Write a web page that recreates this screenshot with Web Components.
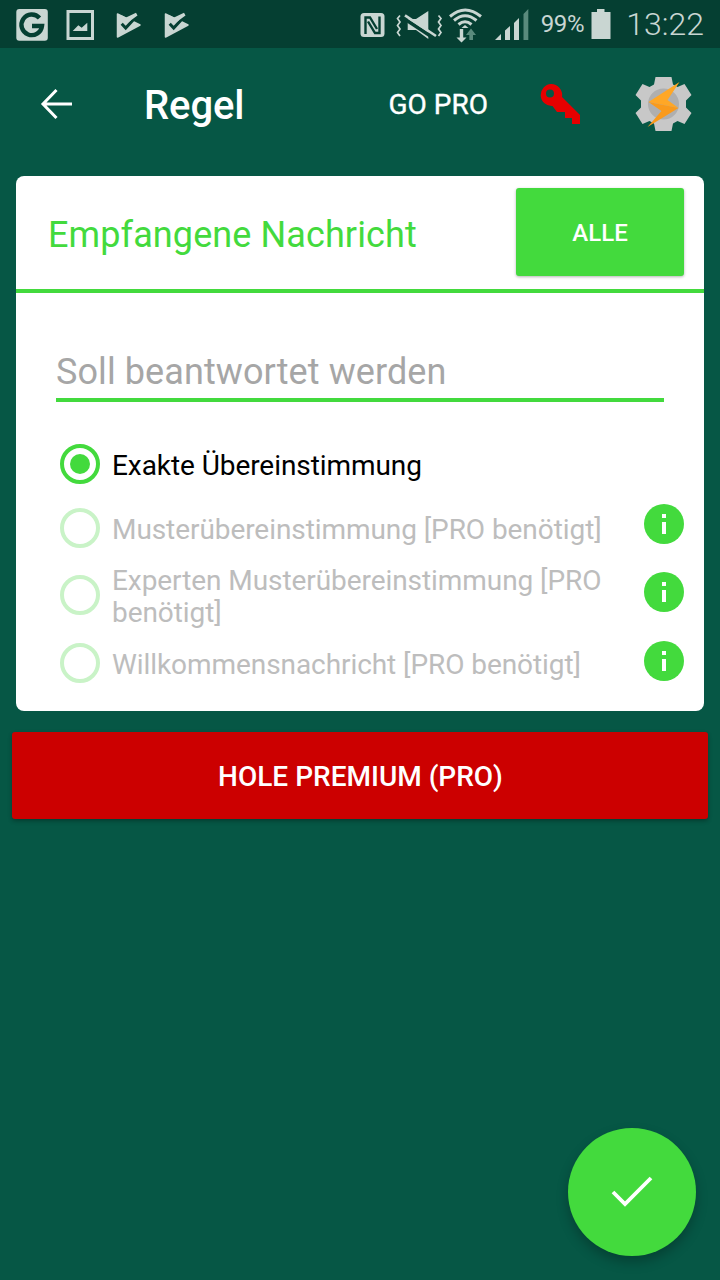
<!DOCTYPE html>
<html><head><meta charset="utf-8">
<style>
html,body{margin:0;padding:0;background:#065745;}
body{width:720px;height:1280px;overflow:hidden;font-family:Roboto,"Liberation Sans",sans-serif;}
app-screen{width:720px;height:1280px;}
</style></head>
<body>
<app-screen>
  <status-bar slot="status"></status-bar>
  <app-toolbar slot="toolbar" title="Regel"></app-toolbar>
  <rule-card heading="Empfangene Nachricht" action="ALLE" placeholder="Soll beantwortet werden">
    <radio-row checked>Exakte Übereinstimmung</radio-row>
    <radio-row disabled info>Musterübereinstimmung [PRO benötigt]</radio-row>
    <radio-row disabled info h="70">Experten Musterübereinstimmung [PRO benötigt]</radio-row>
    <radio-row disabled info h="66">Willkommensnachricht [PRO benötigt]</radio-row>
  </rule-card>
  <premium-button>HOLE PREMIUM (PRO)</premium-button>
  <fab-button slot="fab"></fab-button>
</app-screen>
<script>
function def(name,html,init){
  customElements.define(name,class extends HTMLElement{
    constructor(){super();this.attachShadow({mode:'open'}).innerHTML=html;}
    connectedCallback(){if(init)init(this,this.shadowRoot);}
  });
}
def('app-screen',`<style>
:host{display:flex;flex-direction:column;position:relative;background:#065745;color:#fff;}
.fab{position:absolute;left:568px;top:1128px;}
</style><slot name="status"></slot><slot name="toolbar"></slot><slot></slot><div class="fab"><slot name="fab"></slot></div>`);

const L='#c9d6d2',D='#053f32';
const CHECK=`<path fill="${L}" stroke="${L}" stroke-width="1.500" stroke-linejoin="round" d="M1.500 3L24 14L1.500 26Z"/><path d="M5.700 12.800L9.700 17L18.500 7.500" fill="none" stroke="${D}" stroke-width="3"/><path d="M5 4L10 6.500L20 1.700L21.500 4.500L14 10L11 12L7.500 9Z" fill="${L}"/>`;
def('status-bar',`<style>
:host{display:flex;align-items:center;height:48px;background:${D};color:${L};padding:0 16px;box-sizing:border-box;flex:none;position:relative;}
svg{display:block;flex:none;}
.l{display:flex;align-items:center;}
.r{margin-left:auto;display:flex;align-items:center;}
.pct{font-size:24px;letter-spacing:-.3px;margin-left:12px;line-height:28px;}
.time{font-size:32px;font-weight:300;margin-left:15px;line-height:36px;}
</style>
<div class="l">
<svg width="32" height="32" viewBox="0 0 32 32" style="margin-top:2px"><rect x="0.300" y="0" width="31.500" height="31.700" rx="3" fill="${L}"/><path d="M23.500 9A10.300 10.300 0 1 0 26 17H16" fill="none" stroke="${D}" stroke-width="4.400"/></svg>
<svg width="28" height="30" viewBox="0 0 28 30" style="margin-left:18px;margin-top:2px"><path fill-rule="evenodd" d="M0.500 0H28V30H0.500ZM3.500 3V27H25V3Z" fill="${L}"/><path d="M6.700 21L12.300 15.300L15.700 17.700L21.300 12.700V21Z" fill="${L}"/></svg>
<svg width="26" height="28" viewBox="0 0 26 28" style="margin-left:22px;margin-top:2px">${CHECK}</svg>
<svg width="26" height="28" viewBox="0 0 26 28" style="margin-left:22px;margin-top:2px">${CHECK}</svg>
</div>
<div class="r">
<svg width="25" height="25" viewBox="0 0 25 25" style="margin-top:2px"><rect x="0.500" width="24" height="24" rx="3.500" fill="${L}"/><path d="M5.500 21V4.500H10L17 16M19.500 3.500V20H15L8 8.500" fill="none" stroke="${D}" stroke-width="2.400"/></svg>
<svg width="48" height="32" viewBox="0 0 48 32" style="margin-left:10px;margin-top:2px"><path d="M12.700 10H21L33.300 2V30L21 21H12.700Z" fill="${L}"/><path d="M9 9.500L40 30" stroke="${D}" stroke-width="3.500"/><path d="M10 6.300L41 27" stroke="${L}" stroke-width="2.600"/><path d="M5 6.500L2.500 9.500L5 13L2.500 16.500L5 20L2.500 23.500L5 27M43.500 6.500L46 9.500L43.500 13L46 16.500L43.500 20L46 23.500L43.500 27" fill="none" stroke="${L}" stroke-width="1.700"/></svg>
<svg width="34" height="36" viewBox="0 0 34 36" style="margin-left:6px;margin-top:4px"><g fill="none" stroke="${L}" stroke-width="3"><path d="M1 8.500Q16 -4.500 32 8.500"/><path d="M5 12.500Q16 3 27.500 12.500"/><path d="M9.500 16.500Q16 11 22.500 16.500"/></g><path d="M12.500 20L16 17L19.500 20Z" fill="${L}"/><path d="M10.800 21H14.200V29.500H17.500L12.500 34.500L7.500 29.500H10.800Z" fill="${L}"/><path d="M22 20.500L27 27H24V32H20.300V27H17Z" fill="#5a8a7c"/></svg>
<svg width="34" height="34" viewBox="0 0 34 34" style="margin-left:12px;margin-top:2px"><path d="M0 32L6 26V32Z" fill="${L}"/><path d="M10 22.500L15 18V32H10Z" fill="${L}"/><path d="M19 15L24 10V32H19Z" fill="${L}"/><path d="M28.500 6L33.300 1V32H28.500Z" fill="#5a8a7c"/></svg>
<span class="pct">99%</span>
<svg width="20" height="30" viewBox="0 0 20 30" style="margin-left:7px"><path d="M6 0H13.500V3H19.500V30H0.500V3H6Z" fill="${L}"/></svg>
<span class="time">13:22</span>
</div>`);

def('app-toolbar',`<style>
:host{display:flex;align-items:center;height:112px;flex:none;color:#fff;box-sizing:border-box;padding-left:40px;}
svg{display:block;flex:none;}
.t{font-size:40px;font-weight:500;margin-left:72px;margin-top:4px;line-height:44px;letter-spacing:-.1px;}
.p{font-size:28px;font-weight:400;-webkit-text-stroke:.35px #fff;margin-left:auto;margin-top:2px;line-height:30px;}
.k{margin-left:52px;}
.g{margin-left:55px;margin-right:28px;}
</style>
<svg width="32" height="32" viewBox="0 0 32 32"><path d="M32 16H3M16.500 2L3 16L16.500 30" fill="none" stroke="#fff" stroke-width="3"/></svg>
<span class="t" id="t"></span>
<span class="p">GO PRO</span>
<svg class="k" width="40" height="40" viewBox="0 0 40 40"><path fill="#e60000" fill-rule="evenodd" d="M11 0A11 11 0 0 1 22 13L40 31V40H32V34H25V28H17L12.500 22A11 11 0 1 1 11 0ZM10 5.500A4 4 0 1 0 10 13.500A4 4 0 1 0 10 5.500Z"/></svg>
<svg class="g" width="57" height="56" viewBox="0 0 56 56">
<path fill="#c8c8c8" d="M20 1H36L37.500 8.500L42 11L49 8L56 19L50.500 24.500V31.500L56 37L49 48L42 45L37.500 47.500L36 55H20L18.500 47.500L14 45L7 48L0 37L5.500 31.500V24.500L0 19L7 8L14 11L18.500 8.500Z"/>
<circle cx="28" cy="28" r="15.500" fill="#afafaf"/>
<path fill="#ffa726" d="M44 6L32 24L43 32L13 26Z"/>
<path fill="#f99a1c" d="M13 26L43 32L12 51L26 35Z"/>
</svg>`,(h,s)=>{s.getElementById('t').textContent=h.getAttribute('title');h.removeAttribute('title');});

def('rule-card',`<style>
:host{display:block;margin:16px 16px 0;height:535px;flex:none;background:#fff;border-radius:8px;color:#000;}
.h{display:flex;align-items:center;height:113px;box-sizing:border-box;padding:0 20px 0 32px;}
.tt{font-size:36px;letter-spacing:.1px;color:#43da3d;line-height:42px;margin-top:5px;}
.b{margin-left:auto;width:168px;height:88px;margin-top:-1px;background:#43da3d;color:#fff;border-radius:3px;font-size:24px;font-weight:500;display:flex;align-items:center;justify-content:center;box-shadow:0 1px 3px rgba(0,0,0,.3);}
.bt{margin-top:2px;}
.line{height:4px;background:#43da3d;}
.inp{margin:50px 40px 0;height:59px;box-sizing:border-box;border-bottom:4px solid #43da3d;font-size:36px;letter-spacing:.09px;line-height:59px;color:#a6a6a6;}
.list{margin-top:30px;}
</style>
<div class="h"><span class="tt" id="a"></span><span class="b"><span class="bt" id="b"></span></span></div><div class="line"></div>
<div class="inp" id="c"></div><div class="list"><slot></slot></div>`,(h,s)=>{
 s.getElementById('a').textContent=h.getAttribute('heading');
 s.getElementById('b').textContent=h.getAttribute('action');
 s.getElementById('c').textContent=h.getAttribute('placeholder');
});

def('radio-row',`<style>
:host{display:flex;align-items:center;height:64px;box-sizing:border-box;padding:0 20px 0 44px;font-size:28px;letter-spacing:-.07px;line-height:32px;color:#000;}
:host([disabled]){color:#bdbdbd;}
:host([h="70"]){height:70px;}
:host([h="66"]){height:66px;}
.r{width:40px;height:40px;flex:none;border-radius:50%;box-sizing:border-box;border:4px solid #43da3d;display:flex;align-items:center;justify-content:center;}
:host([disabled]) .r{border-color:#c9f3c7;}
.d{width:20px;height:20px;border-radius:50%;background:#43da3d;}
:host([disabled]) .d{display:none;}
.t{margin-left:12px;flex:1;min-width:0;margin-top:4px;}
.i{display:none;flex:none;width:40px;height:40px;margin-left:30px;margin-top:-8px;}
:host([h="70"]) .i{margin-top:-6px;}
:host([h="66"]) .i{margin-top:-4px;}
:host([info]) .i{display:block;}
</style>
<span class="r"><span class="d"></span></span><span class="t"><slot></slot></span>
<svg class="i" viewBox="0 0 40 40"><circle cx="20" cy="20" r="20" fill="#43da3d"/><rect x="18" y="10" width="4" height="4" fill="#fff"/><rect x="18" y="18" width="4" height="12" fill="#fff"/></svg>`);

def('premium-button',`<style>
:host{display:flex;align-items:center;justify-content:center;margin:21px 12px 0;height:87px;flex:none;background:#cc0000;color:#fff;border-radius:3px;font-size:28px;font-weight:500;box-shadow:0 2px 4px rgba(0,0,0,.3);}
.x{margin-top:2px;margin-left:1px;}
</style><span class="x"><slot></slot></span>`);

def('fab-button',`<style>
:host{display:flex;width:128px;height:128px;border-radius:50%;background:#43da3d;align-items:center;justify-content:center;box-shadow:0 6px 12px rgba(0,0,0,.25);}
</style>
<svg width="42" height="32" viewBox="0 0 42 32"><path d="M2 16L14 28L40 2" fill="none" stroke="#fff" stroke-width="3.800"/></svg>`);
</script>
</body></html>
